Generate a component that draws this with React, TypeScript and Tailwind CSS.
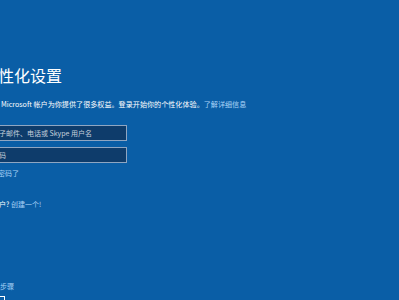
export default function App() {
  return (
    <div
      className="w-[399px] h-[300px] overflow-hidden bg-[#0a5ea6] text-white"
      style={{ fontFamily: '"Noto Sans CJK SC", "Noto Sans", sans-serif' }}
    >
      <div className="flex flex-col">
        <h1 className="mt-[67px] -ml-[18px] text-[16px] leading-[16px] font-normal whitespace-nowrap">
          个性化设置
        </h1>
        <p className="mt-[17px] ml-[1px] text-[7.1px] leading-[8px] whitespace-nowrap">
          Microsoft 帐户为你提供了很多权益。登录开始你的个性化体验。
          <span className="text-[#a8d2f7]">了解详细信息</span>
        </p>
        <div className="mt-[17px] -ml-[12px] w-[139px] h-[16px] border border-[#8fa6c2] bg-[#0e3c6b] flex items-center px-[3px]">
          <span className="text-[7px] leading-[7px] text-[#c5d0dc] whitespace-nowrap">
            电子邮件、电话或 Skype 用户名
          </span>
        </div>
        <div className="mt-[6px] -ml-[12px] w-[139px] h-[16px] border border-[#8fa6c2] bg-[#0e3c6b] flex items-center px-[3px]">
          <span className="text-[7px] leading-[7px] text-[#c5d0dc] whitespace-nowrap">密码</span>
        </div>
        <a className="mt-[7px] -ml-[16px] text-[7px] leading-[7px] text-[#a8d2f7] whitespace-nowrap">
          忘记密码了
        </a>
        <p className="mt-[24px] -ml-[22px] text-[7px] leading-[7px] whitespace-nowrap">
          没有帐户? <span className="text-[#a8d2f7]">创建一个!</span>
        </p>
        <a className="mt-[75px] -ml-[21px] text-[7px] leading-[7px] text-[#a8d2f7] whitespace-nowrap">
          跳过此步骤
        </a>
        <div className="mt-[6px] -ml-[40px] w-[45px] h-[16px] border border-white" />
      </div>
    </div>
  );
}
